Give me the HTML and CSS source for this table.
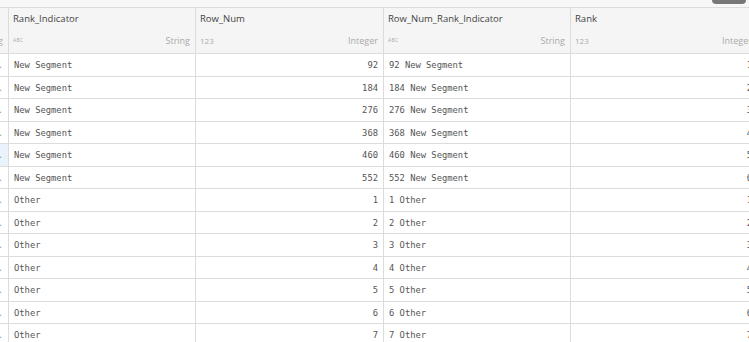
FILE: index.html
```html
<!DOCTYPE html>
<html>
<head>
<meta charset="utf-8">
<link rel="stylesheet" href="styles.css">
</head>
<body>
<div class="page">
  <div class="topbar"><div class="pill"></div></div>
  <div class="grid">
    <div class="cell head clip"><div class="title">&nbsp;</div><div class="types edge-types"><span class="tname">String</span></div></div>
    <div class="cell head"><div class="title">Rank_Indicator</div><div class="types"><span class="tag abc">ABC</span><span class="tname">String</span></div></div>
    <div class="cell head"><div class="title">Row_Num</div><div class="types"><span class="tag num">123</span><span class="tname">Integer</span></div></div>
    <div class="cell head"><div class="title">Row_Num_Rank_Indicator</div><div class="types"><span class="tag abc">ABC</span><span class="tname">String</span></div></div>
    <div class="cell head"><div class="title">Rank</div><div class="types"><span class="tag num">123</span><span class="tname">Integer</span></div></div>
  </div>
  <div class="grid body" id="rows"></div>
</div>
<script src="app.js"></script>
</body>
</html>
```
FILE: app.js
```js
var data = [
  ["New Segment", 92, 1], ["New Segment", 184, 2], ["New Segment", 276, 3],
  ["New Segment", 368, 4], ["New Segment", 460, 5], ["New Segment", 552, 6],
  ["Other", 1, 1], ["Other", 2, 2], ["Other", 3, 3], ["Other", 4, 4],
  ["Other", 5, 5], ["Other", 6, 6], ["Other", 7, 7]
];
var html = "";
data.forEach(function (r, i) {
  var sel = i === 4 ? " sel" : "";
  html += '<div class="cell row clip' + sel + '"><span class="edge">.</span></div>' +
    '<div class="cell row">' + r[0] + '</div>' +
    '<div class="cell row r">' + r[1] + '</div>' +
    '<div class="cell row">' + r[1] + ' ' + r[0] + '</div>' +
    '<div class="cell row r">' + r[2] + '</div>';
});
document.getElementById("rows").innerHTML = html;
```
FILE: styles.css
```css
html, body { margin: 0; padding: 0; background: #fff; }
.page { width: 749px; height: 342px; overflow: hidden; position: relative; }
.topbar { height: 7px; background: #f7f7f7; border-bottom: 1px solid #dcdcdc; position: relative; }
.pill { position: absolute; right: 3px; top: -4px; width: 34px; height: 8px; background: #777; border-radius: 4px; }
.grid { display: grid; grid-template-columns: 9px 187px 188px 187px 187px; width: 758px; }
.cell { box-sizing: border-box; border-right: 1px solid #dcdcdc; overflow: hidden; }
.head { height: 46px; background: #f5f5f5; border-bottom: 1px solid #dcdcdc; padding: 0 5px 0 4px; font-family: "Open Sans", sans-serif; }
.title { font-size: 9.5px; color: #444; line-height: 12px; margin-top: 5px; white-space: nowrap; }
.types { display: flex; justify-content: space-between; align-items: center; margin-top: 9px; height: 12px; }
.tag { color: #aaa; }
.abc { font-size: 5px; letter-spacing: 0.3px; }
.num { font-size: 8px; }
.tname { font-size: 9px; color: #aaa; white-space: nowrap; flex: none; }
.clip { padding: 0; display: flex; justify-content: flex-end; }
.head.clip { flex-direction: column; align-items: flex-end; justify-content: flex-start; }
.edge-types { justify-content: flex-end; margin-right: 5px; }
.body .cell { height: 22.5px; }
.row { border-bottom: 1px solid #dcdcdc; font-family: "DejaVu Sans Mono", monospace; font-size: 8.8px; color: #555; padding: 1px 5px 0 5px; line-height: 21px; white-space: nowrap; }
.r { text-align: right; }
.row.clip { padding: 1px 0 0 0; color: #999; }
.row.clip .edge { margin-right: 5px; flex: none; }
.sel { background: #eaf2fb; }
```
